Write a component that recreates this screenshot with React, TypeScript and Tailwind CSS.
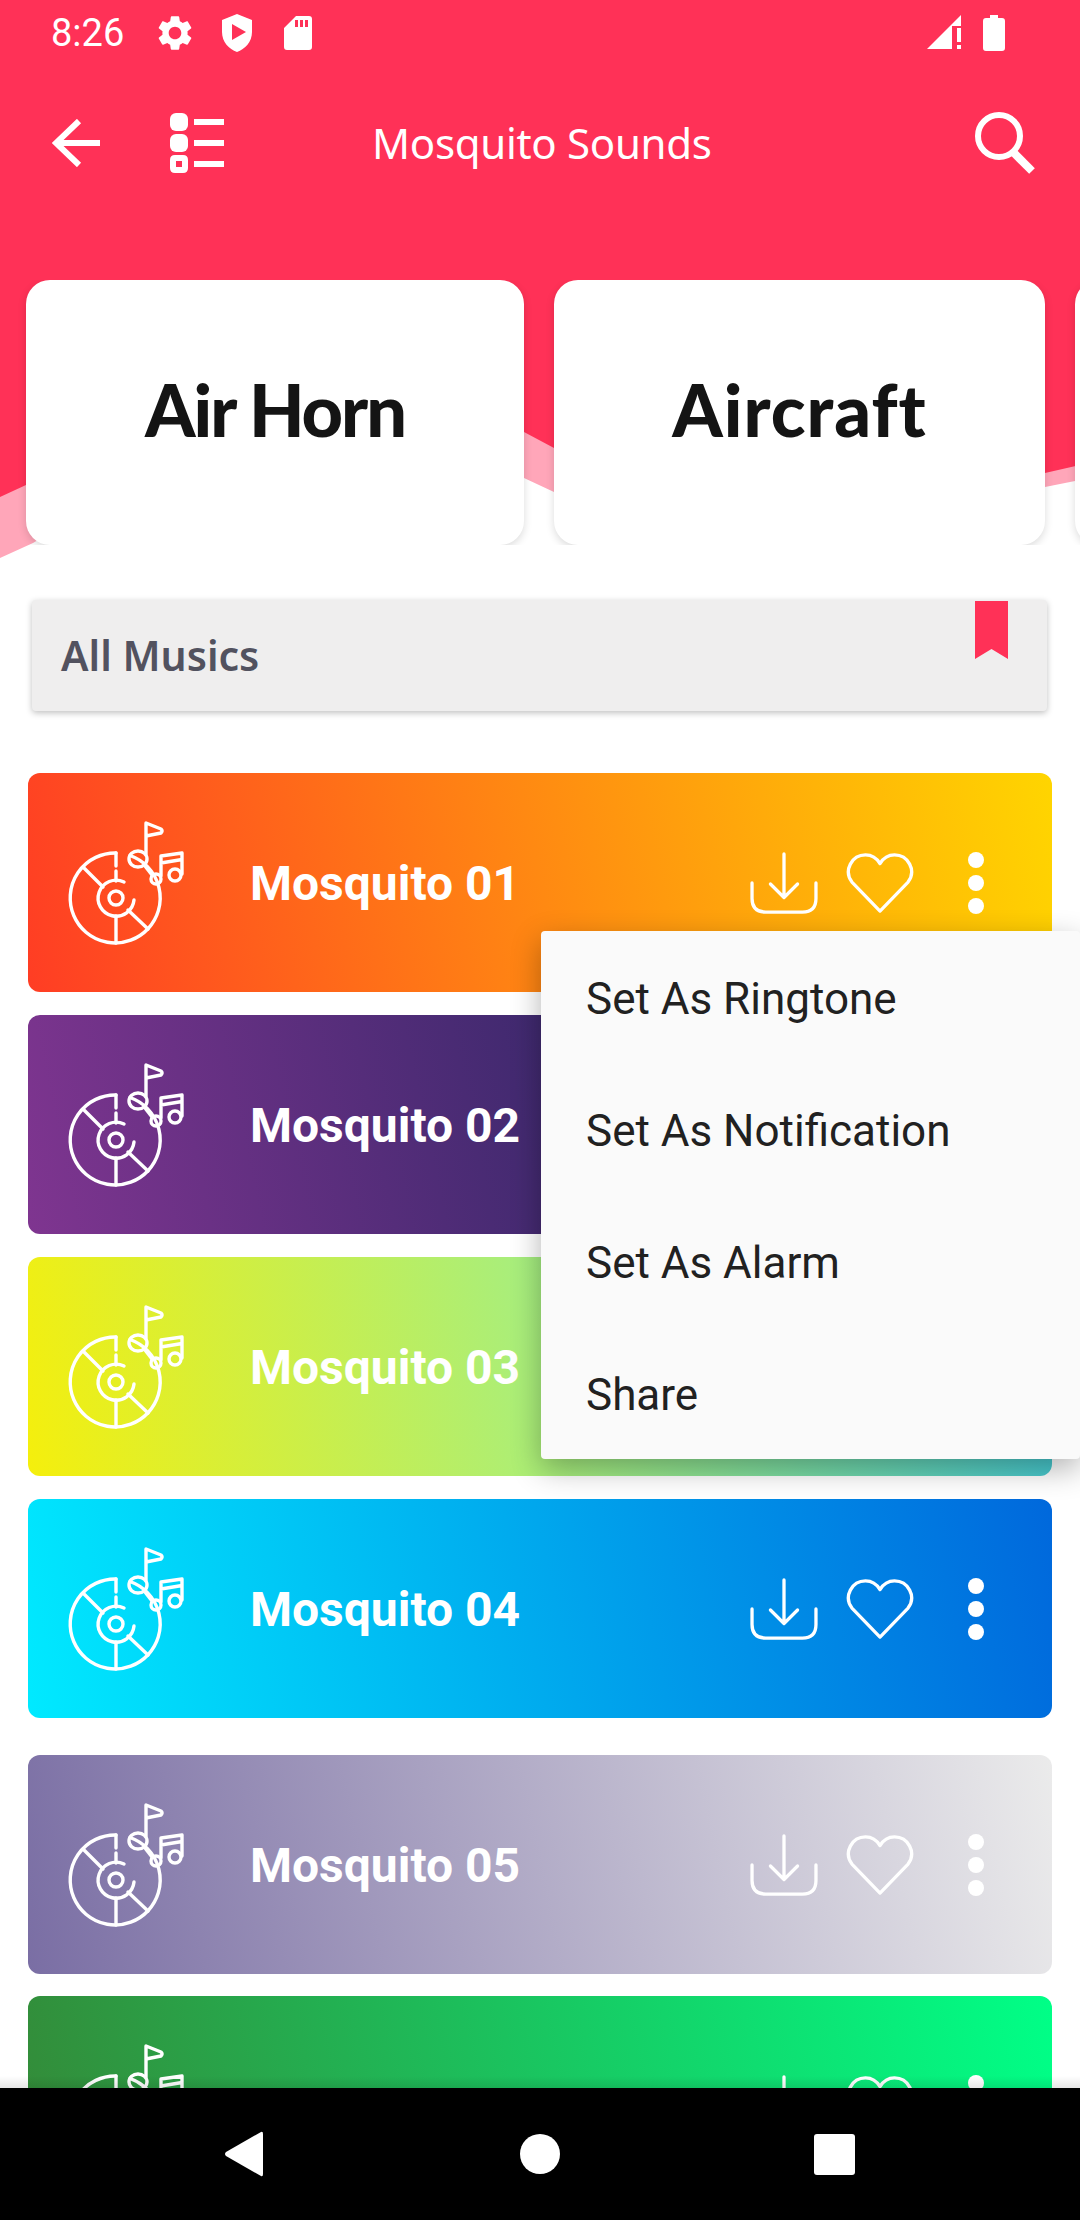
const rows = [
  { name: 'Mosquito 01', cls: 'from-[#ff3d24] to-[#ffd500]', mt: 'mt-[62px]' },
  { name: 'Mosquito 02', cls: 'from-[#7f3590] to-[#051e50]', mt: 'mt-[23px]' },
  { name: 'Mosquito 03', cls: 'from-[#f5ef0c] via-[#a8ee7c] to-[#3fc6d6]', mt: 'mt-[23px]' },
  { name: 'Mosquito 04', cls: 'from-[#00eaff] to-[#0068dc]', mt: 'mt-[23px]' },
  { name: 'Mosquito 05', cls: 'from-[#7a6ea4] to-[#ebebeb]', mt: 'mt-[37px]' },
  // label of the last row sits below the nav bar, so it is never seen
  { name: '', cls: 'from-[#348a38] to-[#00ff87]', mt: 'mt-[22px]' },
]

const menu = ['Set As Ringtone', 'Set As Notification', 'Set As Alarm', 'Share']

function DiscIcon() {
  return (
    <svg width="122" height="128" viewBox="0 0 122 128" fill="none" stroke="white" strokeWidth="3.4" strokeLinecap="round" strokeLinejoin="round" className="shrink-0">
      <path d="M63 34.5A45 45 0 1 1 49 32" />
      <path d="M49 32V45M49 50V60M49 95V122M17 47L36 66M61 89L81 108" />
      <path d="M67 79A18 18 0 1 1 57 61" />
      <circle cx="49" cy="77" r="7" />
      <ellipse cx="71" cy="38" rx="9" ry="8" />
      <path d="M79 33V2L94 8Q96 10 94 12L79 15" />
      <path d="M78 45L85 54" />
      <circle cx="89" cy="58" r="5" />
      <path d="M94 55V35L115 32V53M94 42L115 38.5" />
      <circle cx="108" cy="54" r="6" />
    </svg>
  )
}

function Row({ name, cls, mt }: { name: string; cls: string; mt: string }) {
  return (
    <div className={`${mt} mx-[28px] h-[219px] shrink-0 rounded-[12px] bg-linear-[78deg] ${cls} flex items-center text-white`}>
      <div className="ml-[39px] mt-[4px] w-[183px] shrink-0">
        <DiscIcon />
      </div>
      {name && <span className="mt-[3px] text-[48px] font-bold font-['Roboto',sans-serif] leading-none whitespace-nowrap">{name}</span>}
      <svg width="68" height="62" viewBox="0 0 70 64" fill="none" stroke="white" strokeWidth="3.4" strokeLinecap="round" strokeLinejoin="round" className="ml-auto shrink-0">
        <path d="M2 32V48Q2 62 16 62H54Q68 62 68 48V32" />
        <path d="M35 2V47M21 33L35 47L49 33" />
      </svg>
      <svg width="68" height="60" viewBox="0 0 70 62" fill="none" stroke="white" strokeWidth="3.4" strokeLinejoin="round" className="ml-[28px] shrink-0">
        <path d="M35 60L6 30C-3 18 6 2 20 2C27 2 32 6 35 11C38 6 43 2 50 2C64 2 73 18 64 30Z" />
      </svg>
      <div className="ml-[54px] mr-[68px] flex flex-col gap-[7px] shrink-0">
        <div className="h-[16px] w-[16px] rounded-full bg-white" />
        <div className="h-[16px] w-[16px] rounded-full bg-white" />
        <div className="h-[16px] w-[16px] rounded-full bg-white" />
      </div>
    </div>
  )
}

export default function App() {
  return (
    <div className="relative w-[1080px] h-[2220px] overflow-hidden bg-white flex flex-col">
      <svg className="absolute left-0 top-0" width="1080" height="600" viewBox="0 0 1080 600">
        <path d="M0 558L33 543C180 450 380 410 524 478L554 492C700 560 900 560 1045 487L1080 480V400H0Z" fill="#ffa6b9" />
        <path d="M0 497L26 485C150 390 380 350 524 432L554 448C700 530 900 530 1045 473L1080 465V0H0Z" fill="#ff3157" />
      </svg>

      <div className="relative flex-1 min-h-0 overflow-hidden flex flex-col">
        {/* status bar */}
        <div className="h-[66px] shrink-0 flex items-center text-white pl-[51px]">
          <span className="text-[38px] font-['Roboto',sans-serif] leading-none w-[103px]">8:26</span>
          <svg width="42" height="42" viewBox="0 0 24 24" fill="white" className="shrink-0">
            <path d="M19.14 12.94c.04-.3.06-.61.06-.94 0-.32-.02-.64-.07-.94l2.03-1.58c.18-.14.23-.41.12-.61l-1.92-3.32c-.12-.22-.37-.29-.59-.22l-2.39.96c-.5-.38-1.03-.7-1.62-.94l-.36-2.54c-.04-.24-.24-.41-.48-.41h-3.84c-.24 0-.43.17-.47.41l-.36 2.54c-.59.24-1.13.57-1.62.94l-2.39-.96c-.22-.08-.47 0-.59.22L2.74 8.87c-.12.21-.08.47.12.61l2.03 1.58c-.05.3-.09.63-.09.94s.02.64.07.94l-2.03 1.58c-.18.14-.23.41-.12.61l1.92 3.32c.12.22.37.29.59.22l2.39-.96c.5.38 1.03.7 1.62.94l.36 2.54c.05.24.24.41.48.41h3.84c.24 0 .44-.17.47-.41l.36-2.54c.59-.24 1.13-.56 1.62-.94l2.39.96c.22.08.47 0 .59-.22l1.92-3.32c.12-.22.07-.47-.12-.61l-2.01-1.58zM12 15.6c-1.98 0-3.6-1.62-3.6-3.6s1.62-3.6 3.6-3.6 3.6 1.62 3.6 3.6-1.62 3.6-3.6 3.6z" />
          </svg>
          <svg width="32" height="38" viewBox="0 0 32 38" className="ml-[25px] shrink-0">
            <path fillRule="evenodd" fill="white" d="M16 0L31 6V18C31 28 24 35 16 38C8 35 1 28 1 18V6ZM11 10V26L25 18Z" />
          </svg>
          <svg width="28" height="34" viewBox="0 0 28 34" className="ml-[31px] shrink-0">
            <path fillRule="evenodd" fill="white" d="M12 0H25Q28 0 28 3V31Q28 34 25 34H3Q0 34 0 31V12ZM11 4V11H14V4ZM16 4V11H19V4ZM21 4V11H24V4Z" />
          </svg>
          <svg width="36" height="36" viewBox="0 0 36 36" className="ml-auto mr-[20px] shrink-0">
            <path fill="white" d="M0 34L34 0V11H25V34Z" />
            <path fill="white" d="M30 13H34V27H30ZM30 30H34V34H30Z" />
          </svg>
          <svg width="22" height="36" viewBox="0 0 22 36" className="mr-[75px] shrink-0">
            <path fill="white" d="M7 0H15V3H19Q22 3 22 6V33Q22 36 19 36H3Q0 36 0 33V6Q0 3 3 3H7Z" />
          </svg>
        </div>

        {/* toolbar */}
        <div className="h-[154px] shrink-0 pl-[52px] pr-[45px] flex items-center text-white">
          <svg width="48" height="48" viewBox="0 0 48 48" fill="none" stroke="white" strokeWidth="6" className="shrink-0">
            <path d="M27 2L4 24L27 46M4 24H48" />
          </svg>
          <svg width="54" height="60" viewBox="0 0 54 60" className="ml-[70px] shrink-0">
            <rect x="0" y="0" width="18" height="18" rx="6" fill="white" />
            <rect x="0" y="21" width="18" height="18" rx="6" fill="white" />
            <path fillRule="evenodd" fill="white" d="M5 42H13Q18 42 18 47V55Q18 60 13 60H5Q0 60 0 55V47Q0 42 5 42ZM6 48V54H12V48Z" />
            <path d="M24 6H54V12H24ZM24 27H54V33H24ZM24 48H54V54H24Z" fill="white" />
          </svg>
          <span className="ml-[148px] text-[42px] tracking-[-0.3px] font-['Noto_Sans',sans-serif] leading-none whitespace-nowrap">Mosquito Sounds</span>
          <svg width="60" height="62" viewBox="0 0 60 62" fill="none" stroke="white" strokeWidth="6" className="ml-auto shrink-0">
            <circle cx="24" cy="24" r="21" />
            <path d="M37 39L57 59" strokeWidth="8" />
          </svg>
        </div>

        {/* category cards */}
        <div className="mt-[60px] h-[265px] shrink-0 flex gap-[30px] pl-[26px] overflow-hidden">
          <div className="w-[498px] shrink-0 rounded-[24px] bg-white shadow-[0_3px_8px_rgba(0,0,0,0.14)] flex items-center justify-center pb-[8px]">
            <span className="text-[72px] font-black font-['Lato',sans-serif] leading-none text-[#141414] tracking-[-2px] whitespace-nowrap">Air Horn</span>
          </div>
          <div className="w-[491px] shrink-0 rounded-[24px] bg-white shadow-[0_3px_8px_rgba(0,0,0,0.14)] flex items-center justify-center pb-[8px]">
            <span className="text-[72px] font-black font-['Lato',sans-serif] leading-none text-[#141414] tracking-[1px] whitespace-nowrap">Aircraft</span>
          </div>
          <div className="w-[300px] shrink-0 rounded-[24px] bg-white shadow-[0_3px_8px_rgba(0,0,0,0.14)]" />
        </div>

        {/* all musics */}
        <div className="mt-[55px] ml-[32px] w-[1015px] h-[111px] shrink-0 rounded-[4px] bg-[#efeeee] shadow-[0_2px_6px_rgba(0,0,0,0.25)] pl-[29px] pr-[39px] flex justify-between">
          <span className="self-center text-[41px] font-semibold font-['Noto_Sans',sans-serif] text-[#52525f] leading-none whitespace-nowrap">All Musics</span>
          <svg width="33" height="58" viewBox="0 0 33 58" className="shrink-0 mt-[1px]">
            <path d="M0 0H33V58L16.5 48L0 58Z" fill="#ff3157" />
          </svg>
        </div>

        {rows.map((r, i) => (
          <Row key={i} {...r} />
        ))}

        <div className="absolute left-0 right-0 bottom-0 h-[12px] bg-linear-to-b from-black/0 to-black/10" />
      </div>

      {/* nav bar */}
      <div className="relative h-[132px] shrink-0 bg-black flex items-center">
        <svg width="40" height="46" viewBox="0 0 40 46" className="ml-[224px] shrink-0">
          <path d="M37 1Q39 0 39 3V43Q39 46 37 45L2 25Q0 23 2 21Z" fill="white" />
        </svg>
        <div className="ml-[256px] h-[40px] w-[40px] rounded-full bg-white shrink-0" />
        <div className="ml-[254px] h-[41px] w-[41px] rounded-[3px] bg-white shrink-0" />
      </div>

      {/* popup menu */}
      <div className="absolute left-[541px] top-[931px] w-[539px] h-[528px] rounded-[4px] bg-[#fafafa] shadow-[0_10px_30px_rgba(0,0,0,0.3)] flex flex-col">
        {menu.map((m) => (
          <div key={m} className="h-[132px] flex items-center pl-[45px] text-[44px] font-['Roboto',sans-serif] text-[#212121] leading-none pt-[4px]">
            {m}
          </div>
        ))}
      </div>
    </div>
  )
}
